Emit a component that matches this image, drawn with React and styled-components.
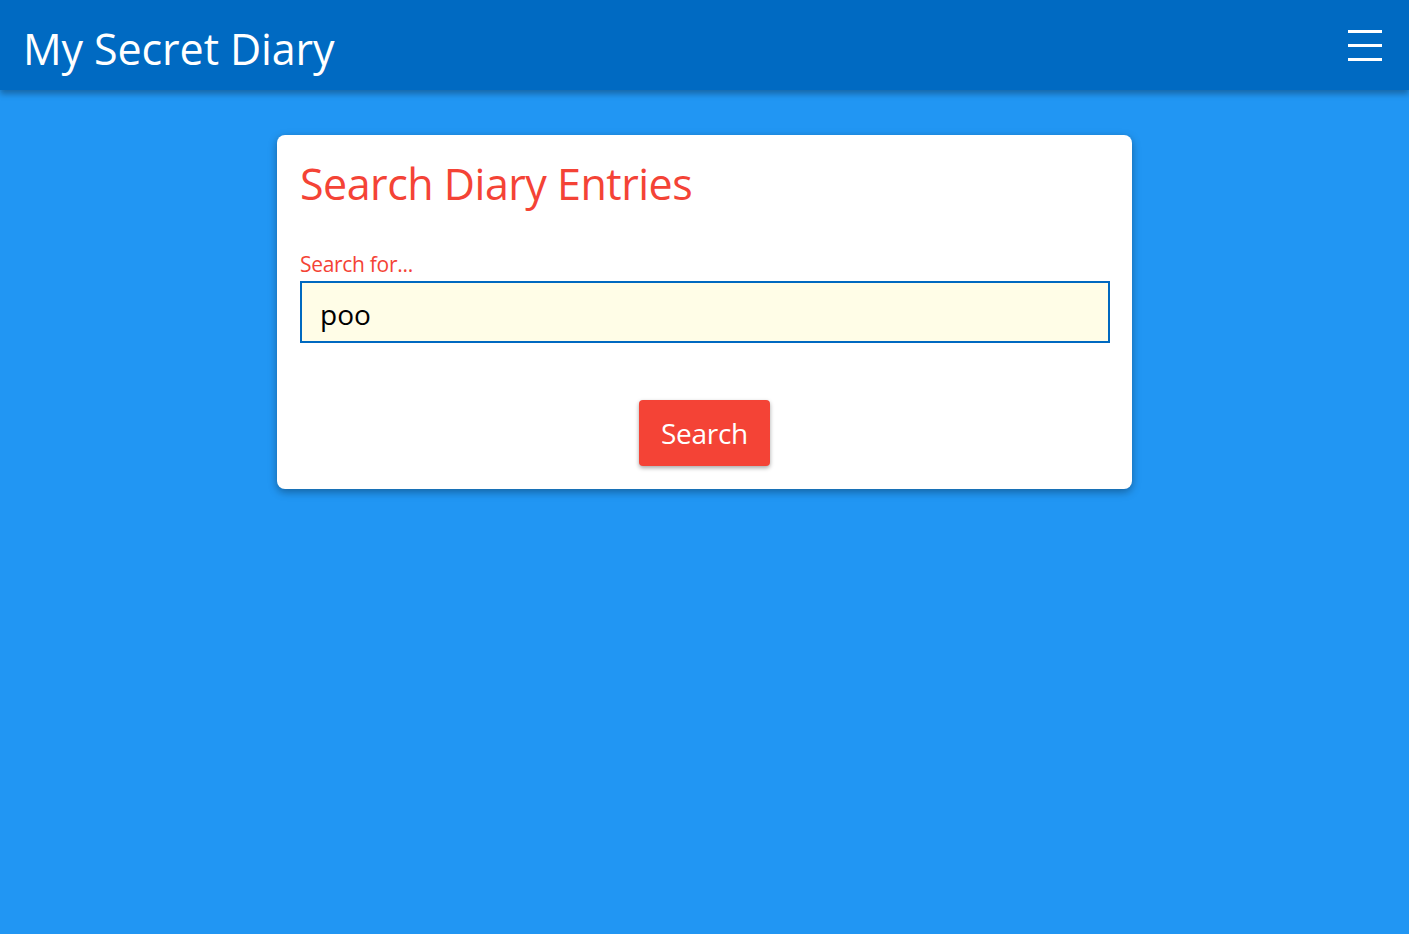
import React, { useState } from "react"
import styled, { createGlobalStyle } from "styled-components"

const GlobalStyle = createGlobalStyle`
    html, body {
        margin: 0;
        padding: 0;
        background: #2196f3;
        font-family: "Open Sans", "Noto Sans", sans-serif;
    }
    * {
        box-sizing: border-box;
    }
`

const Page = styled.div`
    min-height: 934px;
    background: #2196f3;
`

const Header = styled.header`
    display: flex;
    align-items: center;
    justify-content: space-between;
    height: 90px;
    padding: 0 27px 0 23px;
    background: #006ac2;
    box-shadow: 0 4px 6px rgba(0, 0, 0, 0.3);
    position: relative;
    z-index: 2;
`

const Brand = styled.h1`
    margin: 6px 0 0;
    color: #fff;
    font-weight: 400;
    font-size: 43px;
    line-height: 1;
    letter-spacing: -0.1px;
`

const MenuButton = styled.button`
    display: flex;
    flex-direction: column;
    justify-content: space-between;
    width: 34px;
    height: 31px;
    padding: 0;
    margin-top: 1px;
    background: none;
    border: 0;
    cursor: pointer;

    span {
        display: block;
        height: 3px;
        background: #fff;
    }
`

const Main = styled.main`
    display: flex;
    justify-content: center;
    padding-top: 45px;
`

const Card = styled.section`
    width: 855px;
    background: #fff;
    border-radius: 8px;
    padding: 22px 22px 23px 23px;
    box-shadow: 0 3px 8px rgba(0, 0, 0, 0.35);
`

const Title = styled.h2`
    margin: 0 0 40px;
    color: #f44336;
    font-weight: 400;
    font-size: 43px;
    line-height: 54px;
    letter-spacing: -0.5px;
`

const Label = styled.label`
    display: block;
    color: #f44336;
    font-size: 21px;
    line-height: 26px;
    margin-bottom: 4px;
    letter-spacing: -0.3px;
`

const Input = styled.input`
    display: block;
    width: 100%;
    height: 62px;
    padding: 3px 18px 0;
    border: 2px solid #0069c0;
    background: #fffde7;
    font-family: inherit;
    font-size: 28px;
    color: #000;
    outline: none;
`

const Actions = styled.div`
    display: flex;
    justify-content: center;
    margin-top: 57px;
    padding-right: 1px;
`

const Button = styled.button`
    width: 131px;
    height: 66px;
    border: 0;
    border-radius: 4px;
    background: #f44336;
    color: #fff;
    font-family: inherit;
    font-size: 28px;
    letter-spacing: -0.3px;
    box-shadow: 0 2px 4px rgba(0, 0, 0, 0.35);
    cursor: pointer;
`

export default function App() {
    const [query, setQuery] = useState("poo")

    return (
        <Page>
            <GlobalStyle />
            <Header>
                <Brand>My Secret Diary</Brand>
                <MenuButton aria-label="Menu">
                    <span />
                    <span />
                    <span />
                </MenuButton>
            </Header>
            <Main>
                <Card>
                    <Title>Search Diary Entries</Title>
                    <Label htmlFor="search">Search for...</Label>
                    <Input
                        id="search"
                        value={query}
                        onChange={(e) => setQuery(e.target.value)}
                    />
                    <Actions>
                        <Button>Search</Button>
                    </Actions>
                </Card>
            </Main>
        </Page>
    )
}
